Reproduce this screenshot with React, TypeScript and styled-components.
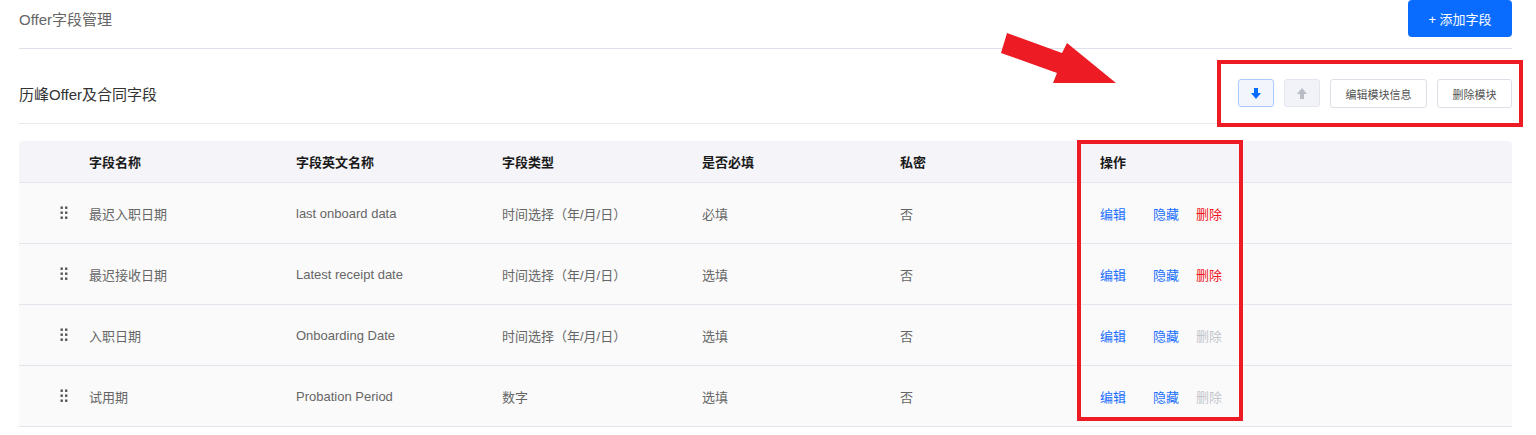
import React from "react";
import styled, { createGlobalStyle } from "styled-components";

const GlobalStyle = createGlobalStyle`
  html, body {
    margin: 0;
    padding: 0;
    background: #ffffff;
  }
  body {
    font-family: "Liberation Sans", "Noto Sans CJK SC", sans-serif;
    font-size: 13px;
    color: #333333;
  }
  * {
    box-sizing: border-box;
  }
`;

const Page = styled.div`
  position: relative;
  width: 1536px;
  height: 435px;
  padding: 0 24px 0 19px;
  overflow: hidden;
`;

const TopBar = styled.div`
  display: flex;
  justify-content: space-between;
  align-items: center;
  height: 49px;
  padding-bottom: 11px;
  border-bottom: 1px solid #dfe1ea;
`;

const PageTitle = styled.span`
  font-size: 15px;
  color: #666666;
`;

const PrimaryButton = styled.button`
  height: 37px;
  width: 104px;
  border: 0;
  border-radius: 4px;
  background: #0a6cff;
  color: #ffffff;
  font-family: inherit;
  font-size: 13px;
  cursor: pointer;
`;

const SectionHeader = styled.div`
  display: flex;
  justify-content: space-between;
  align-items: center;
  height: 75px;
  padding-top: 15px;
  border-bottom: 1px solid #e8e9ef;
`;

const SectionTitle = styled.span`
  font-size: 15px;
  color: #333333;
`;

const Toolbar = styled.div`
  display: flex;
  gap: 10px;
`;

const IconButton = styled.button<{ $active?: boolean }>`
  width: 36px;
  height: 28px;
  padding: 0;
  display: flex;
  align-items: center;
  justify-content: center;
  border-radius: 3px;
  border: 1px solid ${(p) => (p.$active ? "#a9caff" : "#e4e6ef")};
  background: ${(p) => (p.$active ? "#f3f5fd" : "#f2f3f8")};
  color: ${(p) => (p.$active ? "#0a6cff" : "#b9bcc5")};
  cursor: pointer;
`;

const OutlineButton = styled.button<{ $width: number }>`
  width: ${(p) => p.$width}px;
  height: 29px;
  padding: 0;
  border: 1px solid #dcdfe6;
  border-radius: 3px;
  background: #ffffff;
  color: #555555;
  font-family: inherit;
  font-size: 11px;
  cursor: pointer;
`;

const Table = styled.div`
  margin-top: 17px;
  width: 1493px;
`;

const columns = "70px 207px 206px 200px 198px 200px 1fr";

const HeadRow = styled.div`
  display: grid;
  grid-template-columns: ${columns};
  align-items: center;
  height: 42px;
  background: #f5f5f9;
  border-bottom: 1px solid #e2e5ec;
  border-radius: 4px 4px 0 0;
`;

const HeadCell = styled.div`
  font-size: 13px;
  font-weight: 700;
  color: #1a1a1a;
`;

const BodyRow = styled.div`
  display: grid;
  grid-template-columns: ${columns};
  align-items: center;
  height: 61px;
  background: #fafafa;
  border-bottom: 1px solid #e2e5ec;
`;

const Cell = styled.div`
  font-size: 13px;
  color: #666666;
`;

const HandleCell = styled.div`
  padding-left: 41px;
  display: flex;
  align-items: center;
  color: #555555;
`;

const ActionCell = styled.div`
  display: flex;
  align-items: center;
  font-size: 13px;
`;

const ActionLink = styled.span<{ $tone: "blue" | "red" | "muted"; $space?: number }>`
  margin-right: ${(p) => p.$space ?? 0}px;
  cursor: pointer;
  color: ${(p) =>
    p.$tone === "blue" ? "#1a6fff" : p.$tone === "red" ? "#f0141e" : "#c3c6cc"};
`;

/* red callouts drawn over the page */
const Callout = styled.div<{ $x: number; $y: number; $w: number; $h: number }>`
  position: absolute;
  left: ${(p) => p.$x}px;
  top: ${(p) => p.$y}px;
  width: ${(p) => p.$w}px;
  height: ${(p) => p.$h}px;
  border: 4px solid #ed1c24;
  pointer-events: none;
`;

const PointerArrow = styled.svg`
  position: absolute;
  left: 995px;
  top: 28px;
  pointer-events: none;
`;

const DragHandle = () => (
  <svg width="8" height="14" viewBox="0 0 8 14" fill="currentColor">
    <rect x="0.5" y="0.5" width="2.4" height="2.4" />
    <rect x="5" y="0.5" width="2.4" height="2.4" />
    <rect x="0.5" y="5.5" width="2.4" height="2.4" />
    <rect x="5" y="5.5" width="2.4" height="2.4" />
    <rect x="0.5" y="10.5" width="2.4" height="2.4" />
    <rect x="5" y="10.5" width="2.4" height="2.4" />
  </svg>
);

const SolidArrow = ({ up }: { up?: boolean }) => (
  <svg
    width="10"
    height="11"
    viewBox="0 0 10 11"
    fill="currentColor"
    style={{ transform: up ? "rotate(180deg)" : undefined }}
  >
    <path d="M3 0h4v5h3L5 11 0 5h3z" />
  </svg>
);

type Field = {
  name: string;
  en: string;
  type: string;
  required: string;
  secret: string;
  removable: boolean;
};

const fields: Field[] = [
  { name: "最迟入职日期", en: "last onboard data", type: "时间选择（年/月/日）", required: "必填", secret: "否", removable: true },
  { name: "最迟接收日期", en: "Latest receipt date", type: "时间选择（年/月/日）", required: "选填", secret: "否", removable: true },
  { name: "入职日期", en: "Onboarding Date", type: "时间选择（年/月/日）", required: "选填", secret: "否", removable: false },
  { name: "试用期", en: "Probation Period", type: "数字", required: "选填", secret: "否", removable: false },
];

export default function App() {
  return (
    <>
      <GlobalStyle />
      <Page>
        <TopBar>
          <PageTitle>Offer字段管理</PageTitle>
          <PrimaryButton type="button">+ 添加字段</PrimaryButton>
        </TopBar>

        <SectionHeader>
          <SectionTitle>历峰Offer及合同字段</SectionTitle>
          <Toolbar>
            <IconButton $active type="button">
              <SolidArrow />
            </IconButton>
            <IconButton type="button">
              <SolidArrow up />
            </IconButton>
            <OutlineButton $width={97} type="button">编辑模块信息</OutlineButton>
            <OutlineButton $width={75} type="button">删除模块</OutlineButton>
          </Toolbar>
        </SectionHeader>

        <Table>
          <HeadRow>
            <HeadCell />
            <HeadCell>字段名称</HeadCell>
            <HeadCell>字段英文名称</HeadCell>
            <HeadCell>字段类型</HeadCell>
            <HeadCell>是否必填</HeadCell>
            <HeadCell>私密</HeadCell>
            <HeadCell>操作</HeadCell>
          </HeadRow>
          {fields.map((f) => (
            <BodyRow key={f.en}>
              <HandleCell>
                <DragHandle />
              </HandleCell>
              <Cell>{f.name}</Cell>
              <Cell>{f.en}</Cell>
              <Cell>{f.type}</Cell>
              <Cell>{f.required}</Cell>
              <Cell>{f.secret}</Cell>
              <ActionCell>
                <ActionLink $tone="blue" $space={27}>编辑</ActionLink>
                <ActionLink $tone="blue" $space={17}>隐藏</ActionLink>
                <ActionLink $tone={f.removable ? "red" : "muted"}>删除</ActionLink>
              </ActionCell>
            </BodyRow>
          ))}
        </Table>

        <PointerArrow width="125" height="60" viewBox="995 28 125 60">
          <polygon
            fill="#ed1c24"
            points="1007,33 1062,53 1067,43 1116,83 1053,83 1057,73 1001,53"
          />
        </PointerArrow>
        <Callout $x={1217} $y={60} $w={306} $h={67} />
        <Callout $x={1077} $y={140} $w={166} $h={281} />
      </Page>
    </>
  );
}
